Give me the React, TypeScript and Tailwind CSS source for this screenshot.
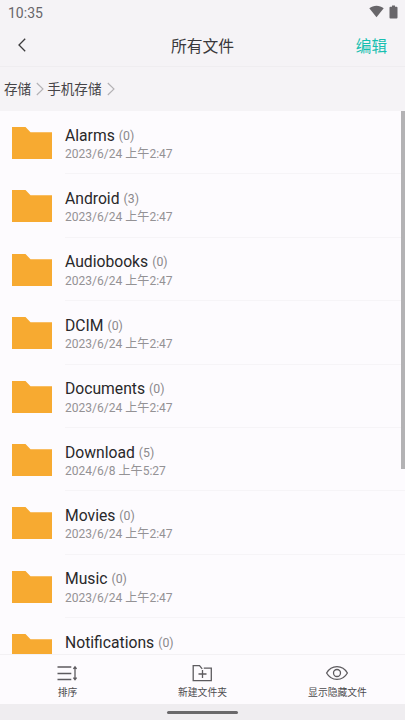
import type { ReactNode } from "react";

interface Folder {
  name: string;
  count: number;
  modified?: string;
}

const FOLDERS: Folder[] = [
  { name: "Alarms", count: 0, modified: "2023/6/24 上午2:47" },
  { name: "Android", count: 3, modified: "2023/6/24 上午2:47" },
  { name: "Audiobooks", count: 0, modified: "2023/6/24 上午2:47" },
  { name: "DCIM", count: 0, modified: "2023/6/24 上午2:47" },
  { name: "Documents", count: 0, modified: "2023/6/24 上午2:47" },
  { name: "Download", count: 5, modified: "2024/6/8 上午5:27" },
  { name: "Movies", count: 0, modified: "2023/6/24 上午2:47" },
  { name: "Music", count: 0, modified: "2023/6/24 上午2:47" },
  { name: "Notifications", count: 0 },
];

const BREADCRUMBS = ["存储", "手机存储"];

function StatusBar() {
  return (
    <div className="flex h-6 shrink-0 items-center justify-between pl-2 pr-[7px] text-[#68666a]">
      <span className="pt-px text-[14px] leading-6">10:35</span>
      <div className="flex items-center gap-[5px] pb-px">
        <svg width="15" height="13" viewBox="0 0 15 13" fill="currentColor">
          <path d="M0.3 3.2C4.4-.2 10.6-.2 14.7 3.2L7.5 12.2Z" />
        </svg>
        <svg width="9" height="14" viewBox="0 0 9 14" fill="currentColor">
          <path d="M3 .5h3v1.3h1.6q.9 0 .9.9v9.9q0 .9-.9.9H1.4q-.9 0-.9-.9V2.7q0-.9.9-.9H3Z" />
        </svg>
      </div>
    </div>
  );
}

function Header() {
  return (
    <header className="grid h-[43px] shrink-0 grid-cols-3 items-center border-b border-[#efedf0]">
      <button className="pl-[17px]">
        <svg width="10" height="14" viewBox="0 0 10 14" fill="none" stroke="#3c3b3d" strokeWidth="1.3">
          <path d="M8.2 .8 2 7l6.2 6.2" />
        </svg>
      </button>
      <h1 className="pt-[3px] text-center text-[15.8px] leading-5 text-[#39383b]">所有文件</h1>
      <button className="pr-[18px] pt-[3px] text-right text-[15.6px] leading-5 text-[#17bfb0]">编辑</button>
    </header>
  );
}

function Breadcrumbs() {
  return (
    <nav className="flex h-11 shrink-0 items-center pl-1 text-[13.6px] text-[#454447]">
      {BREADCRUMBS.map((crumb) => (
        <div key={crumb} className="flex items-center">
          <span className="leading-5">{crumb}</span>
          <svg className="ml-[5px] mr-[3px]" width="8" height="14" viewBox="0 0 8 14" fill="none" stroke="#b3b1b4" strokeWidth="1.1">
            <path d="M.8 1 7 7 .8 13" />
          </svg>
        </div>
      ))}
    </nav>
  );
}

function FolderRow({ folder }: { folder: Folder }) {
  return (
    <li className="flex h-[63.4px] shrink-0 pl-3">
      <svg className="mt-4 shrink-0" width="40" height="32" viewBox="0 0 40 32" fill="#f7aa31">
        <path d="M0 0H13.5L18.5 5.3H40V32H0Z" />
      </svg>
      <div className="ml-[13px] flex-1 border-b border-[#f6f4f7] pt-[14.6px]">
        <div className="flex items-center gap-[4px] leading-5">
          <span className="text-[15.7px] text-[#29282a]">{folder.name}</span>
          <span className="text-[12.3px] text-[#8b898c]">({folder.count})</span>
        </div>
        {folder.modified && (
          <div className="-mt-[0.6px] text-[12.05px] leading-[18px] text-[#949295]">{folder.modified}</div>
        )}
      </div>
    </li>
  );
}

function Action({ label, children }: { label: string; children: ReactNode }) {
  return (
    <button className="flex flex-col items-center pt-[8px] text-[#4b4a4d]">
      <svg className="-ml-px" width="24" height="20" viewBox="0 0 24 20" fill="none" stroke="#5d5b5f" strokeWidth="1.3">
        {children}
      </svg>
      <span className="mt-[3px] text-[9.8px] leading-[14px]">{label}</span>
    </button>
  );
}

export default function App() {
  return (
    <div className="flex h-[720px] w-[405px] flex-col overflow-hidden bg-[#f5f3f6] font-[Roboto,'Noto_Sans_CJK_SC',sans-serif]">
      <StatusBar />
      <Header />
      <Breadcrumbs />

      <main className="relative min-h-0 flex-1 overflow-hidden bg-[#fdfbfe]">
        <ul className="flex flex-col">
          {FOLDERS.map((folder) => (
            <FolderRow key={folder.name} folder={folder} />
          ))}
        </ul>
        {/* Scroll thumb */}
        <div className="absolute right-0 top-0 h-[358px] w-1 bg-[#b3b2b4]" />
      </main>

      <footer className="grid h-[50px] shrink-0 grid-cols-3 border-t border-[#f3f1f4] bg-[#fdfbfe]">
        <Action label="排序">
          <path d="M2.5 4h13.8M2.5 10.5h13.8M2.5 16.5h13.8" />
          <path d="M20 4v12.5M18.4 5.9l1.6-2 1.6 2M18.4 14.6l1.6 2 1.6-2" />
        </Action>
        <Action label="新建文件夹">
          <path d="M12.2 5.9 9.5 2.7H3.2v15h18.1V5.2h-7.5M12.5 7v8M8.5 11h8" />
        </Action>
        <Action label="显示隐藏文件">
          <path d="M1.6 10C6.4 1.5 17.6 1.5 22.4 10C17.6 18.5 6.4 18.5 1.6 10Z" />
          <circle cx="12" cy="10" r="3.5" />
        </Action>
      </footer>

      {/* Gesture bar */}
      <div className="flex h-4 shrink-0 items-center justify-center bg-[#efedf0] pt-px">
        <div className="h-[3px] w-[71px] rounded-full bg-[#6a696b]" />
      </div>
    </div>
  );
}
